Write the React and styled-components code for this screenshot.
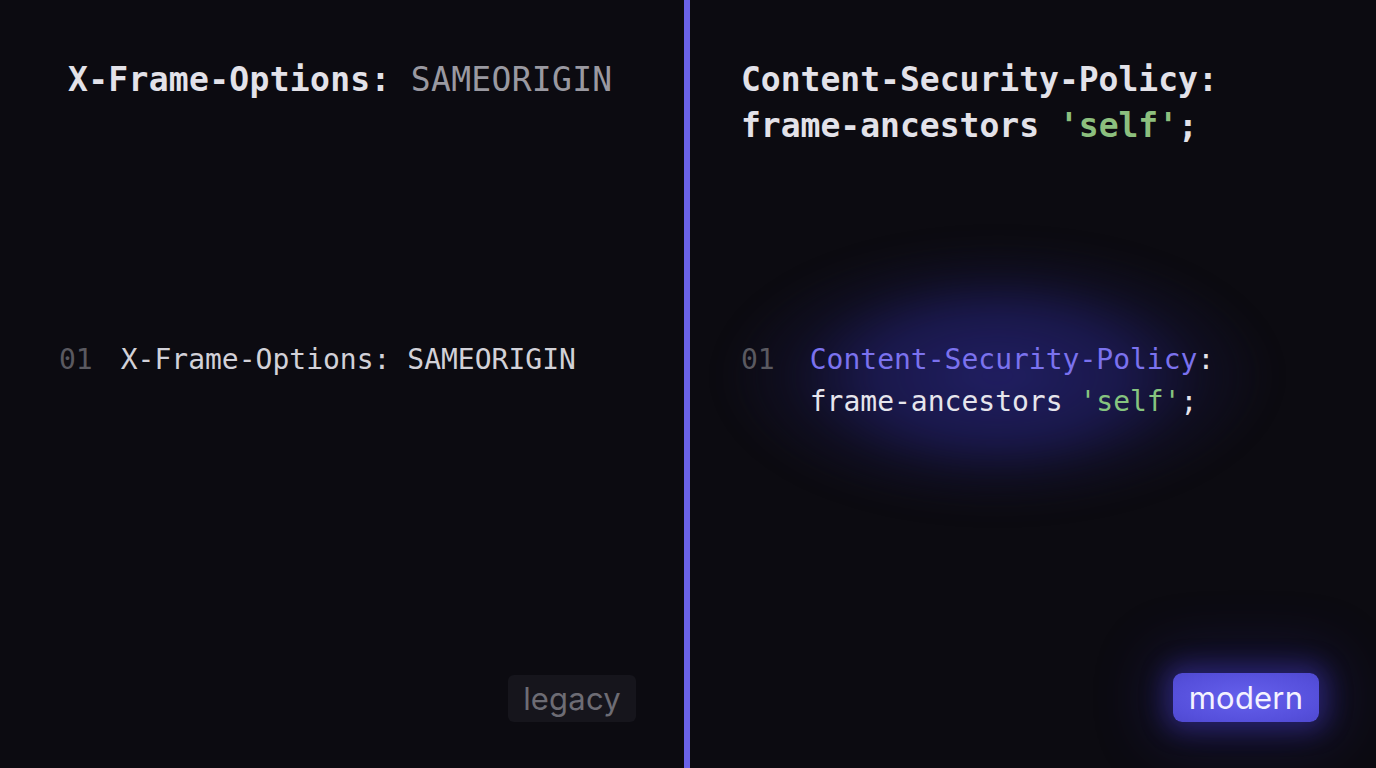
import React from "react";
import styled, { createGlobalStyle } from "styled-components";

const Global = createGlobalStyle`
  html, body { margin: 0; padding: 0; background: #0c0b11; }
  body { font-family: "DejaVu Sans Mono", "Liberation Mono", monospace; }
  * { box-sizing: border-box; }
`;

const Stage = styled.div`
  display: grid;
  grid-template-columns: 684px 6px 1fr;
  width: 1376px;
  height: 768px;
  overflow: hidden;
  background: #0c0b11;
`;

const Divider = styled.div`
  background: #6a62e8;
`;

const Panel = styled.section`
  display: flex;
  flex-direction: column;
  height: 100%;
  padding-left: ${(p) => p.$padLeft}px;
  padding-right: ${(p) => p.$padRight}px;
  padding-bottom: 46px;
`;

const Header = styled.div`
  height: 339px;
  padding-top: 57px;
  padding-left: ${(p) => p.$indent || 0}px;
`;

const Heading = styled.h1`
  margin: 0;
  font-family: "DejaVu Sans Mono", monospace;
  font-size: 33px;
  line-height: 46px;
  font-weight: 700;
  letter-spacing: ${(p) => p.$spacing || 0}px;
  color: #e3e2e9;
  white-space: pre;
`;

const Token = styled.span`
  color: ${(p) => p.$color};
  font-weight: ${(p) => p.$weight || "inherit"};
`;

const CodeBlock = styled.div`
  position: relative;
  display: flex;
  gap: ${(p) => p.$gap}px;
  font-family: "DejaVu Sans Mono", monospace;
  font-size: 28px;
  line-height: 42px;
  ${(p) =>
    p.$glow &&
    `
    &::before {
      content: "";
      position: absolute;
      left: -20px;
      right: 45px;
      top: -100px;
      bottom: -90px;
      background: radial-gradient(ellipse closest-side at 50% 50%, rgba(36, 34, 112, 0.85) 0%, rgba(32, 30, 100, 0.7) 45%, rgba(22, 20, 60, 0.35) 75%, rgba(12, 11, 17, 0) 100%);
      filter: blur(10px);
      z-index: 0;
    }
  `}
`;

const LineNo = styled.span`
  position: relative;
  z-index: 1;
  color: #5a5960;
`;

const CodeText = styled.div`
  position: relative;
  z-index: 1;
  white-space: pre;
  color: #d2d1d8;
`;

const Spacer = styled.div`
  flex: 1;
`;

const Badge = styled.div`
  align-self: flex-end;
  display: flex;
  align-items: center;
  justify-content: center;
  height: ${(p) => p.$h}px;
  width: ${(p) => p.$w}px;
  border-radius: ${(p) => (p.$modern ? 9 : 6)}px;
  font-family: Inter, "Liberation Sans", sans-serif;
  font-size: 31px;
  letter-spacing: 0.2px;
  color: ${(p) => (p.$modern ? "#f4f3ff" : "#6d6c74")};
  background: ${(p) =>
    p.$modern
      ? "radial-gradient(ellipse at 50% 50%, #6560ec 0%, #5650dc 70%, #4f49d0 100%)"
      : "#16151c"};
  box-shadow: ${(p) =>
    p.$modern
      ? "0 0 24px 8px rgba(80, 70, 230, 0.35), 0 0 60px 20px rgba(50, 45, 170, 0.25)"
      : "none"};
`;

export default function App() {
  return (
    <>
      <Global />
      <Stage>
        <Panel $padLeft={59} $padRight={48}>
          <Header $indent={9}>
            <Heading $spacing={0.3}>
              X-Frame-Options: <Token $color="#9a99a1" $weight={400}>SAMEORIGIN</Token>
            </Heading>
          </Header>
          <CodeBlock $gap={28}>
            <LineNo>01</LineNo>
            <CodeText>X-Frame-Options: SAMEORIGIN</CodeText>
          </CodeBlock>
          <Spacer />
          <Badge $w={128} $h={47}>legacy</Badge>
        </Panel>
        <Divider />
        <Panel $padLeft={51} $padRight={57}>
          <Header $indent={-3}>
            <Heading>
              Content-Security-Policy:
              {"\n"}frame-ancestors <Token $color="#8cbf7e">'self'</Token>;
            </Heading>
          </Header>
          <CodeBlock $gap={35} $glow>
            <LineNo>01</LineNo>
            <CodeText>
              <Token $color="#7b72ee">Content-Security-Policy</Token>
              <Token $color="#e4e3ea">:</Token>
              {"\n"}
              <Token $color="#e6e5ec">frame-ancestors </Token>
              <Token $color="#86c47f">'self'</Token>
              <Token $color="#e6e5ec">;</Token>
            </CodeText>
          </CodeBlock>
          <Spacer />
          <Badge $modern $w={146} $h={49}>modern</Badge>
        </Panel>
      </Stage>
    </>
  );
}
